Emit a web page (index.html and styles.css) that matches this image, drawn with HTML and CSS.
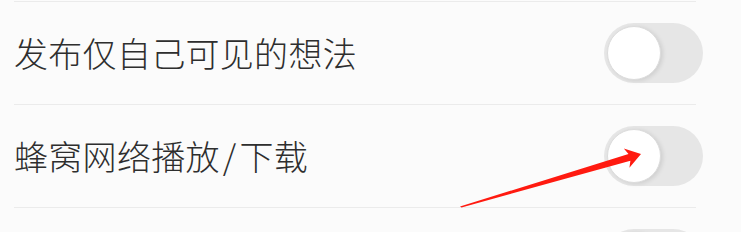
FILE: index.html
```html
<!DOCTYPE html>
<html lang="zh-CN">
<head>
<meta charset="utf-8">
<title>设置</title>
<link rel="stylesheet" href="styles.css">
</head>
<body>
<div class="list">
  <div class="row">
    <span class="label">发布仅自己可见的想法</span>
    <span class="switch"><span class="knob"></span></span>
  </div>
  <div class="row">
    <span class="label">蜂窝网络播放<span class="slash">/</span>下载</span>
    <span class="switch"><span class="knob"></span></span>
  </div>
  <div class="row">
    <span class="label"></span>
    <span class="switch"><span class="knob"></span></span>
  </div>
</div>
<svg class="arrow" width="741" height="232" viewBox="0 0 741 232">
  <polygon fill="#ff1a10" points="460,206.5 628.5,154 623.8,148.6 641,154 629.4,167.8 630.4,160.7 461.5,207.5"/>
</svg>
</body>
</html>
```
FILE: styles.css
```css
html, body {
  margin: 0;
  padding: 0;
  background: #fbfbfb;
  width: 741px;
  height: 232px;
  overflow: hidden;
}
body {
  position: relative;
  font-family: "Noto Sans CJK SC", "Noto Sans", sans-serif;
  color: #2e2e2e;
}
.list {
  padding-top: 1px;
  padding-left: 14px;
}
.row {
  display: flex;
  align-items: center;
  justify-content: space-between;
  height: 102px;
  margin-right: 45px;
  border-top: 1px solid #ebebeb;
}
.label {
  font-size: 34px;
  font-weight: 300;
  letter-spacing: 0.3px;
  line-height: 1;
}
.slash {
  padding: 0 3px;
}
.switch {
  display: flex;
  align-items: center;
  width: 99px;
  height: 60px;
  border-radius: 30px;
  background: #e6e6e6;
  margin-right: -7px;
  box-sizing: border-box;
  padding-left: 3px;
}
.knob {
  width: 54px;
  height: 54px;
  border-radius: 50%;
  background: #ffffff;
  box-sizing: border-box;
  border: 1px solid #dcdcdc;
  box-shadow: 2px 1px 4px rgba(0, 0, 0, 0.10);
}
.arrow {
  position: absolute;
  left: 0;
  top: 0;
}
```
